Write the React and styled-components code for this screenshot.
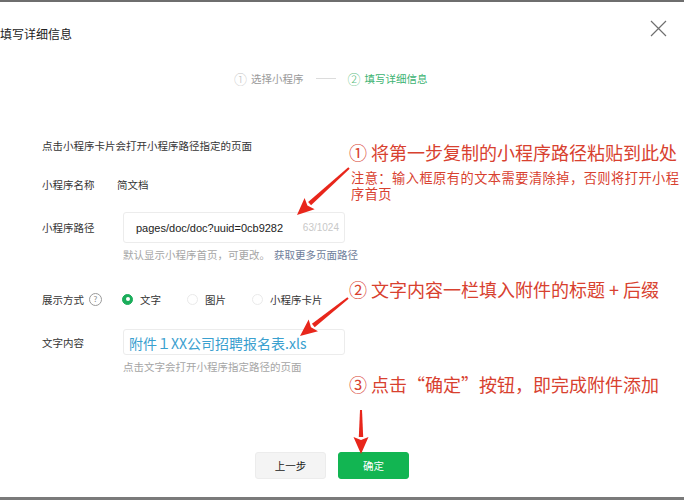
import React from "react";
import styled, { createGlobalStyle } from "styled-components";

const Global = createGlobalStyle`
  html, body {
    margin: 0;
    padding: 0;
    background: #fff;
  }
  body {
    font-family: "Noto Sans CJK SC", "Noto Sans", sans-serif;
    color: #353535;
  }
`;

const Page = styled.div`
  position: relative;
  width: 684px;
  height: 500px;
  box-sizing: border-box;
  border-top: 2px solid #6e6e6e;
  border-bottom: 3px solid #7a7a7a;
  overflow: hidden;
  background: #fff;
`;

const Header = styled.div`
  display: flex;
  align-items: center;
  justify-content: space-between;
  height: 58px;
  padding: 0 16px 0 0;
`;

const Title = styled.h2`
  margin: 4px 0 0 0;
  font-size: 12px;
  font-weight: 400;
  color: #222;
`;

const Close = styled.button`
  border: 0;
  background: none;
  padding: 0;
  margin-top: -4px;
  width: 18px;
  height: 18px;
  display: flex;
  cursor: pointer;
`;

const Steps = styled.div`
  display: flex;
  align-items: center;
  padding-left: 234px;
  height: 24px;
  margin-top: 6px;
  font-size: 10.5px;
`;

const Step = styled.div`
  display: flex;
  align-items: center;
  gap: 4px;
  color: ${(p) => (p.$active ? "#3cb371" : "#9a9a9a")};
`;

const StepNum = styled.span`
  font-size: 13px;
  font-weight: 300;
  color: ${(p) => (p.$active ? "#5fbf85" : "#c4c4c4")};
`;

const StepLine = styled.span`
  width: 20px;
  height: 1px;
  background: #dcdcdc;
  margin: 0 12px;
`;

const Form = styled.div`
  padding: 46px 0 0 42px;
  font-size: 10.5px;
  color: #353535;
`;

const Intro = styled.div`
  height: 20px;
  line-height: 20px;
`;

const Row = styled.div`
  display: grid;
  grid-template-columns: 81px 1fr;
  align-items: center;
  margin-top: ${(p) => p.$mt || 0}px;
  min-height: ${(p) => p.$h || 20}px;
`;

const Label = styled.div`
  display: flex;
  align-items: center;
  gap: 5px;
  color: #353535;
`;

const Value = styled.div`
  margin-left: -6px;
  color: #353535;
`;

const InputBox = styled.div`
  width: 222px;
  height: ${(p) => p.$h}px;
  box-sizing: border-box;
  border: 1px solid #ececec;
  border-radius: 3px;
  display: flex;
  align-items: center;
  justify-content: space-between;
  padding: 0 5px 0 ${(p) => p.$pl}px;
  white-space: nowrap;
  overflow: hidden;
`;

const InputText = styled.span`
  font-family: "Liberation Sans", "Noto Sans CJK SC", sans-serif;
  font-size: 11px;
  color: #222;
`;

const Counter = styled.span`
  font-family: "Liberation Sans", sans-serif;
  font-size: 10px;
  color: #c8c8c8;
`;

const LinkText = styled.span`
  font-family: "Noto Sans CJK SC", "Noto Sans", sans-serif;
  font-size: 14px;
  color: #3aa0cf;
  margin-top: 1px;
`;

const Hint = styled.div`
  margin: 4px 0 0 81px;
  color: #a5a5a5;
  font-size: 10.5px;
  a {
    color: #6e7d9a;
    text-decoration: none;
    margin-left: 4px;
  }
`;

const Radios = styled.div`
  display: flex;
  align-items: center;
  margin-left: -1px;
`;

const RadioItem = styled.label`
  display: flex;
  align-items: center;
  gap: 7px;
  margin-right: ${(p) => p.$mr}px;
  color: #353535;
`;

const RadioDot = styled.span`
  width: 11px;
  height: 11px;
  border-radius: 50%;
  box-sizing: border-box;
  background: ${(p) => (p.$checked ? "#1aad5a" : "#fff")};
  border: 1px solid ${(p) => (p.$checked ? "#1aad5a" : "#eaeaea")};
  display: flex;
  align-items: center;
  justify-content: center;
  &::after {
    content: "";
    width: 4px;
    height: 4px;
    border-radius: 50%;
    background: #fff;
    display: ${(p) => (p.$checked ? "block" : "none")};
  }
`;

const Help = styled.span`
  width: 11px;
  height: 11px;
  border-radius: 50%;
  border: 1px solid #9a9a9a;
  color: #8a8a8a;
  font-size: 8px;
  display: inline-flex;
  align-items: center;
  justify-content: center;
  line-height: 1;
`;

const Footer = styled.div`
  display: flex;
  gap: 12px;
  padding-left: 255px;
  margin-top: 78px;
`;

const Button = styled.button`
  width: 71px;
  height: 27px;
  border-radius: 3px;
  border: 1px solid ${(p) => (p.$primary ? "#12b552" : "#ececec")};
  background: ${(p) => (p.$primary ? "#12b552" : "#f4f4f4")};
  color: ${(p) => (p.$primary ? "#fff" : "#222")};
  font-family: "Noto Sans CJK SC", sans-serif;
  font-size: 10.5px;
  padding: 0;
`;

const Note = styled.div`
  position: absolute;
  left: ${(p) => p.$x}px;
  top: ${(p) => p.$y}px;
  width: ${(p) => p.$w || 340}px;
  color: #d8412f;
  font-size: ${(p) => p.$size}px;
  line-height: ${(p) => p.$lh}px;
  letter-spacing: ${(p) => p.$ls || 0}px;
`;

const Arrows = styled.svg`
  position: absolute;
  left: 0;
  top: 0;
  pointer-events: none;
`;

function Arrow({ x1, y1, x2, y2 }) {
  const dx = x2 - x1;
  const dy = y2 - y1;
  const len = Math.hypot(dx, dy);
  const ux = dx / len;
  const uy = dy / len;
  const head = 17;
  const bx = x2 - ux * head;
  const by = y2 - uy * head;
  const px = -uy;
  const py = ux;
  const hw = 7.5;
  return (
    <g fill="#e8261b">
      <polygon
        points={`${x1 - px},${y1 - py} ${x1 + px},${y1 + py} ${bx + px * 2.2},${by + py * 2.2} ${bx - px * 2.2},${by - py * 2.2}`}
      />
      <polygon
        points={`${x2},${y2} ${bx + px * hw},${by + py * hw} ${bx + ux * 3},${by + uy * 3} ${bx - px * hw},${by - py * hw}`}
      />
    </g>
  );
}

export default function App() {
  return (
    <>
      <Global />
      <Page>
        <Header>
          <Title>填写详细信息</Title>
          <Close aria-label="关闭">
            <svg width="17" height="17" viewBox="0 0 17 17">
              <path d="M1 1L16 16M16 1L1 16" stroke="#6f6f6f" strokeWidth="1.2" />
            </svg>
          </Close>
        </Header>

        <Steps>
          <Step>
            <StepNum>①</StepNum>选择小程序
          </Step>
          <StepLine />
          <Step $active>
            <StepNum $active>②</StepNum>填写详细信息
          </Step>
        </Steps>

        <Form>
          <Intro>点击小程序卡片会打开小程序路径指定的页面</Intro>

          <Row $mt={18}>
            <Label>小程序名称</Label>
            <Value>简文档</Value>
          </Row>

          <Row $mt={18} $h={31}>
            <Label>小程序路径</Label>
            <InputBox $h={31} $pl={12}>
              <InputText>pages/doc/doc?uuid=0cb9282</InputText>
              <Counter>63/1024</Counter>
            </InputBox>
          </Row>
          <Hint>
            默认显示小程序首页，可更改。<a href="#">获取更多页面路径</a>
          </Hint>

          <Row $mt={27}>
            <Label>
              展示方式<Help>?</Help>
            </Label>
            <Radios>
              <RadioItem $mr={26}>
                <RadioDot $checked />
                文字
              </RadioItem>
              <RadioItem $mr={26}>
                <RadioDot />
                图片
              </RadioItem>
              <RadioItem $mr={0}>
                <RadioDot />
                小程序卡片
              </RadioItem>
            </Radios>
          </Row>

          <Row $mt={20} $h={26}>
            <Label>文字内容</Label>
            <InputBox $h={26} $pl={5}>
              <LinkText>附件１XX公司招聘报名表.xls</LinkText>
            </InputBox>
          </Row>
          <Hint>点击文字会打开小程序指定路径的页面</Hint>
        </Form>

        <Footer>
          <Button>上一步</Button>
          <Button $primary>确定</Button>
        </Footer>

        <Note $x={349} $y={137} $size={18} $lh={26}>
          ① 将第一步复制的小程序路径粘贴到此处
        </Note>
        <Note $x={351} $y={168} $size={13.2} $lh={16} $w={333} $ls={0.5}>
          注意：输入框原有的文本需要清除掉，否则将打开小程序首页
        </Note>
        <Note $x={349} $y={274} $size={18} $lh={26}>
          ② 文字内容一栏填入附件的标题 + 后缀
        </Note>
        <Note $x={349} $y={369} $size={18} $lh={26}>
          ③ 点击“确定”按钮，即完成附件添加
        </Note>

        <Arrows width="684" height="500" viewBox="0 0 684 500">
          <Arrow x1={349} y1={166} x2={297} y2={213} />
          <Arrow x1={348} y1={296} x2={300} y2={334} />
          <Arrow x1={361} y1={408} x2={361} y2={452} />
        </Arrows>
      </Page>
    </>
  );
}
